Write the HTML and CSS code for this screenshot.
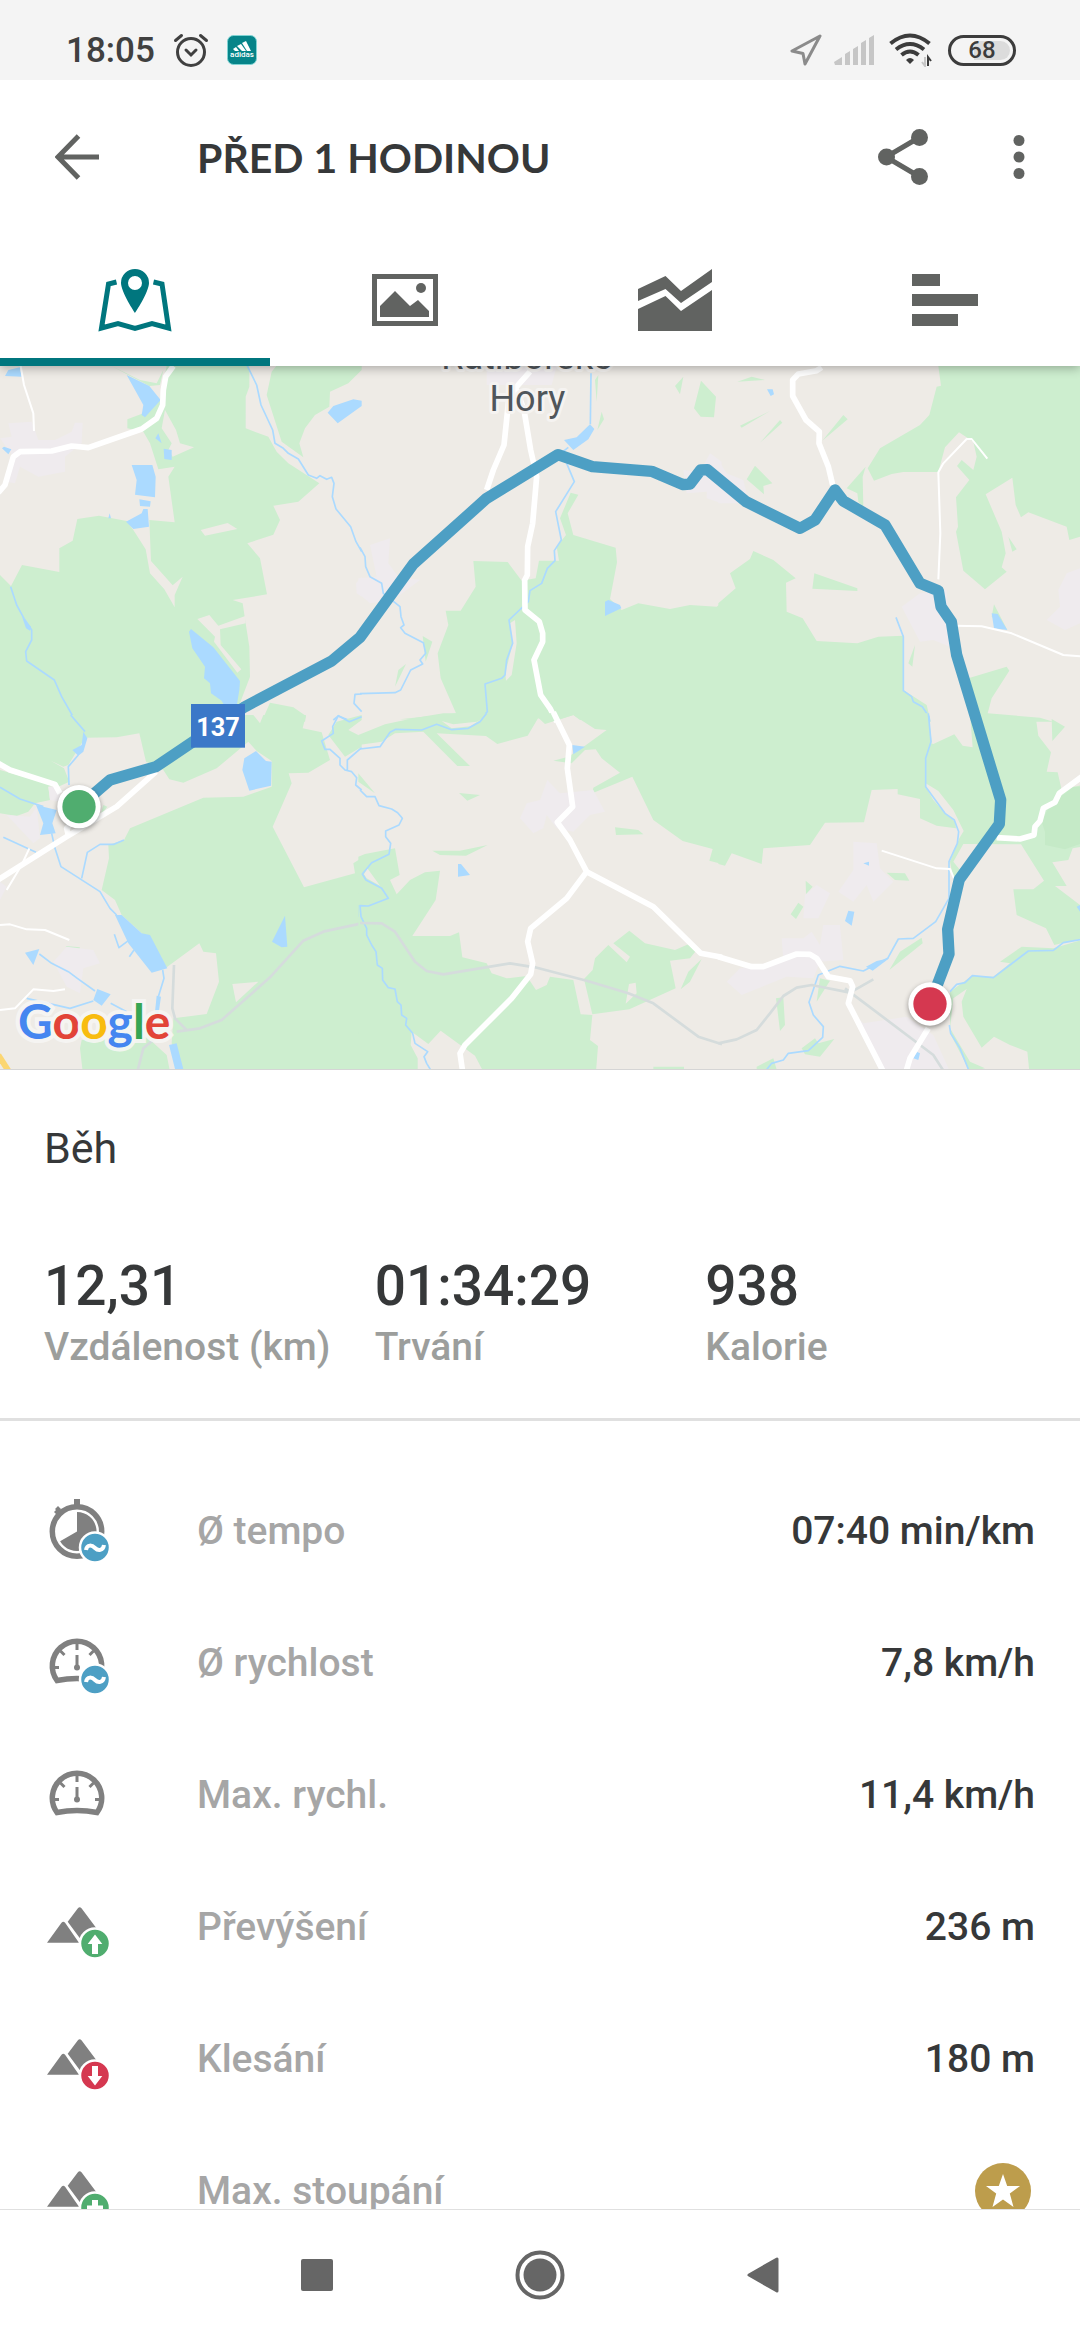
FILE: index.html
```html
<!DOCTYPE html>
<html lang="cs">
<head>
  <meta charset="UTF-8" />
  <meta name="viewport" content="width=device-width, initial-scale=1" />
  <title>Před 1 hodinou</title>
  <link rel="stylesheet" href="styles.css">
</head>
<body>
  <!-- Status bar -->
  <div class="status-bar">
    <div class="status-left">
      <span class="clock">18:05</span>
      <svg class="status-alarm" width="36" height="36" viewBox="0 0 36 36" fill="none" stroke="#404040" stroke-width="3" stroke-linecap="round">
        <circle cx="18" cy="20" r="13.5" />
        <path d="M13 18l5 5 5-5M2.5 8.5l6-5M33.5 8.5l-6-5" />
      </svg>
      <svg class="status-app" width="30" height="30" viewBox="0 0 30 30">
        <rect x=".5" y=".5" width="29" height="29" rx="6" fill="#068489" stroke="#7fd3d3" />
        <path d="M6 14l3-2 3 4H8zM10 11l4-2 5 7h-4zM15 8l4-2 5 10h-4z" fill="#fff" />
        <text class="app-name" x="15" y="22" text-anchor="middle">adidas</text>
      </svg>
    </div>
    <div class="status-right">
      <svg width="32" height="32" viewBox="0 0 32 32" fill="none" stroke="#8b8b8b" stroke-width="3" stroke-linejoin="round">
        <path d="M30 2L2 17l11 2.5L15 30z" />
      </svg>
      <svg class="status-signal" width="40" height="30" viewBox="0 0 40 30" fill="#c6c6c6">
        <path d="M0 27l8-5v8H1zM11 19l5-3v14h-5zM19 14l5-3v19h-5zM27 8l5-3v25h-5zM35 3l5-3v30h-5z" />
      </svg>
      <svg class="status-wifi" width="44" height="34" viewBox="0 0 44 34" fill="none" stroke="#3c3c3c" stroke-width="4">
        <path d="M1.5 10.5q19.5-16 39 0M7 16.5q14-11 28 0M12.5 22q8.5-7 17 0" />
        <path d="M21 31l-4-4q4-4 8 0z" fill="#3c3c3c" stroke="none" />
        <path d="M39 33v-9l3 4" stroke-width="2" /><path d="M36 24v9l-3-4" stroke="#c6c6c6" stroke-width="2" />
      </svg>
      <span class="battery">68</span>
    </div>
  </div>

  <header class="header">
    <div class="toolbar">
      <button class="icon-btn" aria-label="Zpět">
        <svg width="44" height="46" viewBox="0 0 44 46" fill="none" stroke="#616361" stroke-width="5">
          <path d="M44 23H4M23.5 2L3 23l20.5 21" />
        </svg>
      </button>
      <h1>PŘED 1 HODINOU</h1>
      <button class="icon-btn share-btn" aria-label="Sdílet">
        <svg width="50" height="56" viewBox="0 0 50 56" fill="#616361">
          <path d="M42 8L8 28l34 20" fill="none" stroke="#616361" stroke-width="5" />
          <circle cx="8.5" cy="28" r="8.5" /><circle cx="41.5" cy="8.5" r="8.5" /><circle cx="41.5" cy="47.5" r="8.5" />
        </svg>
      </button>
      <button class="icon-btn" aria-label="Další možnosti">
        <svg width="12" height="46" viewBox="0 0 12 46" fill="#616361">
          <circle cx="6" cy="6.5" r="5.5" /><circle cx="6" cy="23" r="5.5" /><circle cx="6" cy="39.5" r="5.5" />
        </svg>
      </button>
    </div>

    <nav class="tabs">
      <button class="tab active" aria-label="Mapa">
        <svg width="74" height="64" viewBox="0 0 74 64">
          <path d="M18.5 14l-8 2L3.5 60l16.500-4.500 17 5 17-5L70.5 60l-6.500-44-8.500-2" fill="none" stroke="#00767e" stroke-width="5" />
          <path d="M37 1a14 14 0 0 0-14 14c0 9 14 30 14 30s14-21 14-30A14 14 0 0 0 37 1zm0 7a7 7 0 1 1 0 14 7 7 0 0 1 0-14z" fill="#00767e" />
        </svg>
      </button>
      <button class="tab" aria-label="Fotky">
        <svg width="66" height="52" viewBox="0 0 66 52" fill="#616361">
          <rect x="2.5" y="2.5" width="61" height="47" fill="none" stroke="#616361" stroke-width="5" />
          <path d="M8 43V32l15-15 15 15 8-6 11 11v6z" /><circle cx="49" cy="14" r="5" />
        </svg>
      </button>
      <button class="tab" aria-label="Grafy">
        <svg width="74" height="62" viewBox="0 0 74 62" fill="#616361">
          <path d="M0 20L27.5 7 43 22 74 0v13L43 34 27.5 20 0 32z" />
          <path d="M0 40l27.5-13L43 42l31-21v41H0z" />
        </svg>
      </button>
      <button class="tab" aria-label="Mezičasy">
        <svg width="66" height="52" viewBox="0 0 66 52" fill="#616361">
          <path d="M0 0h28v12H0zM0 20h66v12H0zM0 40h46v12H0z" />
        </svg>
      </button>
    </nav>
  </header>

  <!-- Map with the route -->
  <div class="map">
    <svg class="map-canvas" viewBox="0 0 3240 2109" preserveAspectRatio="xMidYMid slice">
      <!-- north west -->
      <g transform="translate(0 -18)">
        <path class="wood" d="M500,18 748,18 748,80 737,110 737,205 805,230 830,275 865,310 958,370 895,425 820,437 840,480 820,524 742,550 780,595 801,703 698,720 728,730 737,790 748,860 750,950 712,1050 575,1080 0,1080 0,645 33,678 66,615 178,636 178,565 218,542 232,477 297,467 380,483 400,510 437,568 450,640 493,688 524,742 524,705 548,650 518,676 453,603 448,480 524,487 505,350 524,320 475,328 450,250 430,215 382,205 382,178 430,160 480,120zM815,35 835,10 1085,10 1085,30 1045,70 990,95 988,140 945,165 915,205 898,250 910,292 845,245 800,105zM785,1085 810,1028 880,1042 918,1068 915,1085zM335,18 420,60 470,70 490,30 480,75 448,78 385,45z" />
        <path class="land" d="M592,777 628,765 655,797 736,768 737,790 660,808 662,855 724,928 712,938 642,845 645,830zM602,510 683,489 712,507 615,527zM495,150 528,210 540,250 582,262 518,290 505,270 515,250 485,205z" />
        <path class="town" d="M0,235 35,230 25,190 95,185 115,240 165,240 215,215 225,188 248,188 245,250 195,290 195,335 115,350 60,320 45,370 20,365 40,290zM1085,650 1068,670 1070,700 1085,710z" />
        <path class="water" d="M380,45 448,78 482,120 435,172 425,165 430,135zM395,315 457,315 467,350 465,412 405,404 410,360zM418,418 452,424 450,440 420,438zM378,485 425,460 430,447 443,447 447,500 400,507zM1085,122 1060,118 1000,138 983,158 1013,190 1085,138zM573,807 640,862 720,963 718,990 708,1050 680,1050 665,1022 633,1000 630,970 612,955 615,920 577,865 567,815zM466,235 475,220 485,250zM491,266 515,270 515,300 493,297zM15,48 25,30 60,22 65,50zM6,265 12,260 34,268 25,283zM325,475 329,460 333,475zM66,770 93,800 90,812 78,805z" />
        <path class="stream" d="M742,18 770,75 783,135 818,210 825,250 850,265 865,280 895,297 925,345 950,355 960,347 980,358 995,352 1002,370 997,410 1008,447 1052,500 1068,545 1085,575M32,680 50,735 72,775 95,810 95,840 77,875 80,903 163,960 185,1010 225,1080M1085,1002 1065,1003 1062,1030 1085,1055M1000,1080 1015,1068 1045,1080" />
        <path class="road" d="M520,18 497,50 490,90 488,135 470,175 425,207 265,263 215,258 155,273 60,275 40,290 15,375 -5,398" />
        <path class="lane" d="M62,18 72,75 100,160 102,213" />
      </g>
      <!-- north -->
      <g transform="translate(1080 -18)">
        <path class="wood" d="M340,603 443,606 485,662 527,655 537,602 597,602 590,560 606,540 618,525 600,475 632,398 655,404 623,460 640,525 767,563 771,607 750,717 785,750 835,730 930,747 990,735 1070,740 1086,728 1086,1070 660,1080 640,1065 600,1078 530,1075 500,1090 120,1078 288,1060 242,955 233,880 265,795 257,752 302,752 347,680zM188,828 217,845 197,905zM115,930 138,912 105,980zM705,60 715,45 710,125zM725,155 732,178 712,210zM945,78 970,50 960,103zM1023,62 1068,110 1062,172 1022,170 1002,145z" />
        <path class="land" d="M465,780 470,850 455,945 438,962 436,940 458,850 450,790z" />
        <path class="town" d="M30,555 90,535 85,610 115,650 180,660 100,720 30,730 -5,700 -5,655 50,650zM380,18 590,18 575,75 380,75zM970,330 1020,335 1050,280 1085,305 1085,430 1040,415 1040,395 980,400z" />
        <path class="water" d="M612,240 650,232 690,193 703,207 685,238 640,270zM735,725 745,720 780,735 784,745 735,768z" />
        <path class="stream" d="M693,40 691,193M590,290 625,262M620,310 643,365 587,455 604,540 583,572 585,602 562,625 545,670 510,692 505,725 447,780 458,850 440,900 435,945 425,955 375,972 382,1055 355,1085M0,562 15,590 17,620 30,650 65,670 70,700 120,740 123,770 132,795 122,803 135,820 190,848 197,880 180,900 188,912 152,930 122,990 105,998 0,1001" />
        <path class="road" d="M510,35 470,80 445,130 432,255 400,330 380,390M470,90 492,150 512,270 530,350 518,490 503,560 502,645 494,660 495,750 538,785 548,820 548,845 522,900 542,1005 570,1045 590,1085" />
      </g>
      <!-- north east -->
      <g transform="translate(2160 -18)">
        <path class="wood" d="M655,18 1080,18 1080,530 1048,540 1040,500 925,457 903,472 887,435 877,353 797,403 845,515 857,580 845,622 860,635 795,688 730,632 708,515 714,500 708,412 748,360 711,318 725,300 760,330 770,290 760,245 717,217 675,262 655,336 550,336 515,342 462,362 443,325 480,265 600,195 628,165 650,80 663,77zM100,573 160,600 227,655 198,668 200,755 248,775 290,843 412,850 475,830 550,827 550,990 620,1035 632,1085 -5,1085 -5,730 47,685 30,640 90,597zM283,640 412,685 412,693 277,686zM380,385 437,320 428,350 430,440 415,425 412,400zM80,358 105,317 157,370 130,378 132,403zM52,65 95,50 135,60zM60,197 150,153 65,203zM120,248 180,180 187,188zM307,242 370,165 383,178zM585,855 577,920 565,910zM865,530 890,568 877,575zM822,733 862,810 815,770zM745,955 860,920 868,932 815,1015 803,1060 960,1073 1000,1085 760,1085z" />
        <path class="town" d="M545,740 600,700 680,690 690,860 640,840 600,845zM980,780 1020,740 1015,690 1040,640 1080,625 1080,790 1035,810zM-5,300 20,340 70,360 80,400 60,430 -5,430z" />
        <path class="water" d="M815,760 833,762 862,810 822,805zM141,88 158,88 162,103 152,108z" />
        <path class="stream" d="M528,772 550,830 550,992 575,1010 580,1025 607,1040 627,1070 629,1085" />
        <path class="road" d="M305,22 290,32 235,42 218,60 218,108 258,180 298,215 297,250 325,320 338,375" />
        <path class="lane" d="M655,658 661,520 655,337 670,310 740,237 755,237 802,296M705,797 785,799 875,820 1030,885 1080,889" />
      </g>
      <!-- south west -->
      <g transform="translate(0 1047)">
        <path class="wood" d="M0,0 760,0 780,25 790,0 918,0 908,40 965,52 990,135 925,173 866,175 875,205 818,335 912,517 1065,475 1060,445 1086,428 1086,1070 550,1070 515,985 520,910 620,897 657,800 648,715 610,710 598,685 500,757 425,655 365,600 345,555 305,525 327,430 325,390 372,375 390,340 610,248 730,245 815,215 815,138 770,108 745,80 650,160 550,203 508,193 490,165 438,140 418,55 350,67 255,68 205,150 190,155 152,137 192,160 208,200 175,215 165,205 30,160 0,145zM0,165 165,212 145,215 150,255 105,265 85,290 50,303 0,295zM245,975 440,965 500,1020 510,1070 248,1070 240,1000zM197,693 240,697 228,722zM985,60 1010,20 1085,0 1085,15 1045,45 1085,65 1085,95 1035,125zM310,270 322,275 300,305z" />
        <path class="land" d="M697,807 775,800 708,862z" />
        <path class="town" d="M20,300 90,305 110,275 120,370 100,385zM160,740 200,695 280,705 300,745 250,760 240,835 200,815zM145,215 175,215 185,260 150,255zM0,500 20,515 0,555z" />
        <path class="water" d="M768,108 798,138 815,140 813,212 748,227 727,165 733,130zM345,600 365,600 425,655 450,660 502,760 455,773 385,685zM108,270 170,285 157,325 167,355 120,360 130,325zM855,602 862,695 845,697 816,680zM75,713 118,702 100,750zM292,822 332,838 305,872 280,855zM250,50 262,70 250,110 235,122 217,105 245,90zM470,842 483,845 475,900 465,890zM507,990 530,985 552,1070 527,1070zM1075,570 1086,570 1086,610 1075,605z" />
        <path class="stream" d="M212,0 255,50M235,120 205,155 207,210M0,217 60,252 130,275M155,355 165,400 183,455 300,530 330,580 350,600M245,490 262,412 300,388 342,388 372,375M10,367 108,412M343,658 357,698 385,677M388,725 402,705M118,717 155,745 205,770 232,790 285,828M332,865 380,890M280,858 210,880 80,850M488,765 492,790 475,845M1085,5 1048,20 1015,2 998,35 1000,55 965,78 975,103 990,103 1020,130 1020,150 1035,165 1055,170 1070,188 1067,210 1085,225M1042,165 1042,135 1085,98" />
        <path class="rail" d="M1085,625 970,650 910,677 810,787 665,915 600,940 530,950M522,750 517,880 525,910 560,945M412,1070 430,1000 460,975" />
        <path class="road" d="M-5,494 200,365 350,275 468,170M-5,145 30,165 165,208 180,235M205,360 200,340 240,300" />
        <path class="lane" d="M0,630 30,628 80,643 135,645 208,675M0,885 45,880 100,823 160,828 195,823M88,400 65,450 20,525" />
        <path class="highway" d="M-5,1020 30,1075" />
      </g>
      <!-- south -->
      <g transform="translate(1080 1047)">
        <path class="wood" d="M-5,90 -5,60 75,28 160,10 250,-5 650,-5 640,0 555,27 535,8 503,62 412,87 378,63 230,55 330,153 292,153 190,50 105,55 65,80zM640,0 680,-5 1086,-5 1086,447 1048,437 1058,402 968,378 880,315 817,185 697,235 700,218 780,173 725,130 707,103 675,105 635,145 580,137 625,125 675,92 740,45 705,42zM297,234 360,240 322,257zM217,407 300,407 383,390 318,422 240,420zM765,337 835,345 850,358 768,360zM-5,175 45,235 -5,200zM-5,425 15,417 105,400 119,480 90,495 110,538 150,495 195,472 240,467 227,555 157,663 270,663 297,652 307,727 380,745 395,775 440,790 500,783 528,825 560,810 570,785 640,795 662,898 697,900 690,975 714,993 708,1070 370,1070 345,1022 242,947 205,987 155,950 152,990 173,1030 173,1070 -5,1070zM672,792 698,765 705,730 745,690 800,742 810,725 760,685 808,647 855,685 945,705 985,688 1010,705 990,730 930,737 947,820 808,883 697,898zM1025,732 990,800 962,823 985,770zM880,1055 972,1055 972,1070 880,1070z" />
        <path class="land" d="M807,807 827,803 830,835 797,866zM245,18 280,28 350,20 370,10 330,34 275,40zM22,460 60,512 20,490 12,478z" />
        <path class="town" d="M480,310 500,265 540,255 562,195 600,235 700,225 735,290 690,300 640,350 590,340 560,300 550,340 520,355z" />
        <path class="water" d="M637,90 675,95 640,118zM294,447 303,447 330,480 294,485z" />
        <path class="stream" d="M0,102 60,95 90,52 107,43 185,45 230,28 275,44 325,40 360,20 380,-5M0,225 20,245 45,245 57,272 95,282 113,293 127,310 117,330 77,348 77,365 92,385 87,418 35,443 7,477 18,495 65,520 85,550 25,573 0,572 3,605 20,640 20,660 35,690 48,710 52,750 67,760 68,795 85,818 105,822 112,860 123,870 125,900 140,910 137,930 158,955 165,985 203,1010 192,1025 200,1045 215,1070" />
        <path class="rail" d="M0,624 65,625 105,650 165,740 200,768 250,778 450,745 525,757 680,797 805,835 880,865 1015,965 1086,988" />
        <path class="road" d="M580,-8 628,90 622,160 638,275 592,322 630,375 680,470 880,575 1022,715 1086,727M680,470 620,550 512,640 503,680 518,745 512,778 455,850 315,990 300,1015 308,1070" />
      </g>
      <!-- south east -->
      <g transform="translate(2160 1047)">
        <path class="wood" d="M-5,-5 625,-5 635,80 617,130 617,215 640,255 675,295 705,320 708,340 650,332 600,310 600,252 533,238 533,222 455,225 432,322 315,323 270,390 130,400 125,447 35,415 15,452 -5,447zM640,87 703,58 728,92 758,97 750,-5 810,0 948,12 955,62 993,112 980,170 1013,172 1025,225 1086,210 1086,395 1058,400 1045,435 997,442 1040,513 1005,513 1080,570 1086,670 1003,690 978,640 890,600 880,523 940,523 972,497 903,388 730,387 700,440 720,465 700,490 690,440 718,370 731,348 700,285 655,228 617,205 617,130 632,85zM840,740 905,695 1000,700 1086,675 1086,1070 928,1070 922,1010 870,990 822,965 785,998 730,905 725,860 740,822 700,850 690,940 750,1040 795,1060 750,1070 690,955 690,830 755,783 820,785 870,745zM508,765 540,710 605,668 608,685zM500,473 555,475 568,497 525,495zM257,497 278,515 258,538zM235,563 250,575 228,612 212,598zM300,790 330,797 290,860zM168,850 190,847 195,930 180,948zM245,1000 285,970 295,985 343,972 300,1025 255,1018zM110,1055 160,1030 172,1070 110,1070zM995,12 1035,35 997,78z" />
        <path class="park" d="M1086,215 1060,215 990,270 965,320 975,350 975,390 1035,403 1086,385z" />
        <path class="town" d="M400,380 470,385 480,460 520,500 460,560 440,510 400,560 355,530 400,465zM250,610 255,540 290,510 330,535 295,610zM185,670 250,670 275,650 300,690 310,630 360,630 370,735 300,740 280,790 200,785 65,840 20,800 60,760 190,735zM385,880 430,925 560,905 640,960 690,1070 480,1070z" />
        <path class="water" d="M430,445 447,440 447,452zM385,587 403,590 395,632 375,618zM438,755 470,738 508,730 458,767zM590,1010 600,1015 595,1035 580,1030zM1070,575 1080,570 1080,590z" />
        <path class="stream" d="M625,-5 633,80 617,130 617,215 675,295 703,315 716,350 712,385 687,440 687,550 647,620 580,670 535,672 503,730 430,768 360,754 295,780 267,862 280,900 310,935 308,967 265,1007 205,1015 190,1035 155,1045 135,1070M690,830 710,808 735,803 757,782 820,788 925,708 1000,706 1030,683 1086,673M688,930 692,955 720,1000 748,1070" />
        <path class="rail" d="M-5,985 50,973 110,945 150,895 190,843 230,818 275,810 375,830 390,833 460,793M375,820 640,1020 672,1070" />
        <path class="road" d="M-5,725 95,755 130,755 230,717 270,718 290,730 325,785 390,797 398,815 385,865 490,1070M625,940 570,1030 558,1070M830,368 900,372 942,360 945,335 960,318 970,280 1005,262 1018,235 1086,185" />
        <path class="lane" d="M485,407 650,460 690,462 702,490" />
      </g>

      <g class="place">
        <text x="1580" y="10">Ratibořské</text>
        <text x="1582" y="135">Hory</text>
      </g>

      <path class="route" d="M237,1322 330,1242 468,1202 735,1022 995,885 1080,814 1240,594 1460,397 1674,266 1777,302 1955,316 2050,356 2070,354 2102,312 2122,311 2238,407 2400,487 2445,462 2505,372 2530,405 2655,477 2760,652 2815,674 2823,722 2854,767 2870,867 3002,1302 2998,1374 2878,1540 2843,1690 2847,1764 2790,1914" />

      <rect x="573" y="1014" width="162" height="131" fill="#3b78c8" />
      <text class="road-number" x="654" y="1109">137</text>

      <g class="marker">
        <circle class="marker-rim" cx="237" cy="1322" r="65" /><circle cx="237" cy="1322" r="50" fill="#50ad6f" />
      </g>
      <g class="marker">
        <circle class="marker-rim" cx="2790" cy="1914" r="65" /><circle cx="2790" cy="1914" r="50" fill="#d53850" />
      </g>
    </svg>
    <div class="google"><span class="g-blue">G</span><span class="g-red">o</span><span class="g-yellow">o</span><span class="g-blue">g</span><span class="g-green">l</span><span class="g-red">e</span></div>
  </div>

  <!-- Summary -->
  <section class="summary">
    <h2>Běh</h2>
    <div class="stats">
      <div class="stat"><strong>12,31</strong><span>Vzdálenost (km)</span></div>
      <div class="stat"><strong>01:34:29</strong><span>Trvání</span></div>
      <div class="stat"><strong>938</strong><span>Kalorie</span></div>
    </div>
  </section>

  <!-- Details -->
  <ul class="details">
    <li>
      <svg width="72" height="72" viewBox="0 0 72 72">
        <circle cx="32" cy="36.5" r="24.7" fill="none" stroke="#808080" stroke-width="5.5" />
        <path d="M29 4h6v8h-6zM9 17l2-2-1-1 3-3 3 3-1 2 2 1-4 4zM32 36.5V17a19.5 19.5 0 1 1-16.9 29.2z" fill="#808080" />
        <circle cx="50" cy="52.5" r="15" fill="#4d9fc4" stroke="#fff" stroke-width="2.5" />
        <path d="M41 55c1-6 6-5 9-2s8 3 9-3" fill="none" stroke="#fff" stroke-width="4" />
      </svg>
      <span class="label">Ø tempo</span>
      <span class="value">07:40 min/km</span>
    </li>
    <li>
      <svg width="72" height="72" viewBox="0 0 72 72">
        <path d="M12 53.5a24.7 24.7 0 1 1 40 0q-20-4-40 0z" fill="none" stroke="#808080" stroke-width="5.5" />
        <path d="M32 17v6M8 40.5h6M50 40.5h6M15.5 24l4 4M48.5 24l-4 4M32 28v12" fill="none" stroke="#808080" stroke-width="3" />
        <circle cx="32" cy="40.5" r="3" fill="#808080" />
        <circle cx="50" cy="52.5" r="15" fill="#4d9fc4" stroke="#fff" stroke-width="2.5" />
        <path d="M41 55c1-6 6-5 9-2s8 3 9-3" fill="none" stroke="#fff" stroke-width="4" />
      </svg>
      <span class="label">Ø rychlost</span>
      <span class="value">7,8 km/h</span>
    </li>
    <li>
      <svg width="72" height="72" viewBox="0 0 72 72">
        <path d="M12 53.5a24.7 24.7 0 1 1 40 0q-20-4-40 0z" fill="none" stroke="#808080" stroke-width="5.5" />
        <path d="M32 17v6M8 40.5h6M50 40.5h6M15.5 24l4 4M48.5 24l-4 4M32 28v12" fill="none" stroke="#808080" stroke-width="3" />
        <circle cx="32" cy="40.5" r="3" fill="#808080" />
      </svg>
      <span class="label">Max. rychl.</span>
      <span class="value">11,4 km/h</span>
    </li>
    <li>
      <svg width="72" height="72" viewBox="0 0 72 72">
        <path d="M2 51.7l14.5-20q1.8-2 3.6 0L34 51.7zM22.7 30.7l10.2-13.500q1.8-2 3.6 0L52 38 34.7 47z" fill="#808080" />
        <circle cx="50" cy="52.5" r="15" fill="#50ad6f" stroke="#fff" stroke-width="2.5" />
        <path d="M50 43.5l7.3 9.5H53v10h-6V53h-4.3z" fill="#fff" />
      </svg>
      <span class="label">Převýšení</span>
      <span class="value">236 m</span>
    </li>
    <li>
      <svg width="72" height="72" viewBox="0 0 72 72">
        <path d="M2 51.7l14.5-20q1.8-2 3.6 0L34 51.7zM22.7 30.7l10.2-13.500q1.8-2 3.6 0L52 38 34.7 47z" fill="#808080" />
        <circle cx="50" cy="52.5" r="15" fill="#d53850" stroke="#fff" stroke-width="2.5" />
        <path d="M50 62.5l7.3-9.5H53V43h-6v10h-4.3z" fill="#fff" />
      </svg>
      <span class="label">Klesání</span>
      <span class="value">180 m</span>
    </li>
    <li>
      <svg width="72" height="72" viewBox="0 0 72 72">
        <path d="M2 51.7l14.5-20q1.8-2 3.6 0L34 51.7zM22.7 30.7l10.2-13.500q1.8-2 3.6 0L52 38 34.7 47z" fill="#808080" />
        <circle cx="50" cy="52.5" r="15" fill="#50ad6f" stroke="#fff" stroke-width="2.5" />
        <path d="M47 45h6v5.5h5v6h-5V62h-6v-5.5h-5v-6h5z" fill="#fff" />
      </svg>
      <span class="label">Max. stoupání</span>
      <svg class="premium" width="56" height="56" viewBox="0 0 56 56">
        <circle cx="28" cy="28" r="28" fill="#bd9d4c" />
        <path d="M28 11l4.2 12H45L34.8 30.5 38.5 44 28 36.5 17.5 44l3.7-13.5L11 23h12.8z" fill="#fff" />
      </svg>
    </li>
  </ul>

  <!-- System navigation -->
  <nav class="system-nav">
    <button aria-label="Poslední aplikace"><svg width="32" height="32"><rect width="32" height="32" rx="2" fill="#666" /></svg></button>
    <button aria-label="Domů">
      <svg width="50" height="50" viewBox="0 0 50 50"><circle cx="25" cy="25" r="22.5" fill="none" stroke="#666" stroke-width="4" /><circle cx="25" cy="25" r="16.5" fill="#666" /></svg>
    </button>
    <button aria-label="Zpět">
      <svg width="32" height="38" viewBox="0 0 32 38"><path d="M2 19L30 3v32z" fill="#666" stroke="#666" stroke-width="3" stroke-linejoin="round" /></svg>
    </button>
  </nav>
</body>
</html>
```
FILE: styles.css
```css
* {
  box-sizing: border-box;
}
body {
  margin: 0;
  height: 100vh;
  display: flex;
  flex-direction: column;
  overflow: hidden;
  font-family: Roboto, 'Noto Sans', sans-serif;
  font-weight: 500;
  color: #363839;
  background: #fff;
}
h1, h2, ul {
  margin: 0;
  padding: 0;
}
svg {
  display: block;
  flex-shrink: 0;
}
button {
  display: flex;
  align-items: center;
  justify-content: center;
  padding: 0;
  border: none;
  background: none;
  cursor: pointer;
}

/* Status bar */
.status-bar {
  position: relative;
  z-index: 2;
  display: flex;
  flex-shrink: 0;
  justify-content: space-between;
  height: 80px;
  padding: 20px 64px 0 66px;
  background: #f4f4f4;
}
.status-left,
.status-right {
  display: flex;
  align-items: center;
}
.clock {
  font-size: 35px;
  color: #404040;
}
.status-alarm {
  margin-left: 18px;
}
.status-app {
  margin-left: 18px;
}
.app-name {
  font-size: 8px;
  fill: #fff;
}
.status-signal {
  margin-left: 12px;
}
.status-wifi {
  margin-left: 15px;
}
.battery {
  width: 68px;
  height: 31px;
  margin-left: 15px;
  border: 3px solid #3c3c3c;
  border-radius: 16px;
  background: linear-gradient(90deg, transparent 20px, #dcdcdc 20px) content-box;
  padding: 3px;
  font-size: 24px;
  line-height: 19px;
  text-align: center;
  color: #3c3c3c;
}

/* Header */
.header {
  position: relative;
  z-index: 1;
  flex-shrink: 0;
  background: #fff;
  box-shadow: 0 2px 10px rgba(0,0,0,0.3);
}
.toolbar {
  display: flex;
  align-items: center;
  height: 154px;
  padding: 0 55px;
}
.toolbar h1 {
  flex: 1;
  padding-left: 98px;
  font-family: Lato, sans-serif;
  font-size: 41px;
  font-weight: 700;
}
.share-btn {
  margin-right: 85px;
}
.tabs {
  display: flex;
  height: 132px;
}
.tab {
  flex: 1;
  border-top: 8px solid transparent;
  border-bottom: 8px solid transparent;
}
.tab.active {
  border-bottom-color: #00767e;
}

/* Map */
.map {
  position: relative;
  flex-shrink: 0;
  background: #eeebe6;
  border-bottom: 1px solid #d5d5d5;
}
.map-canvas {
  width: 100%;
  height: auto;
}
.wood {
  fill: #cdeecf;
}
.park {
  fill: #c5eac7;
}
.land {
  fill: #eeebe6;
}
.town {
  fill: #efebee;
}
.water {
  fill: #abdaff;
}
.stream,
.road,
.lane,
.rail,
.highway,
.route {
  fill: none;
  stroke-linejoin: round;
}
.stream {
  stroke: #abdaff;
  stroke-width: 5px;
}
.road {
  stroke: #fff;
  stroke-width: 17px;
}
.lane {
  stroke: #fff;
  stroke-width: 6px;
}
.rail {
  stroke: #d5dcdc;
  stroke-width: 8px;
}
.highway {
  stroke: #fbd672;
  stroke-width: 18px;
}
.route {
  stroke: #4d9fc4;
  stroke-width: 34px;
}
.place {
  font-size: 108px;
  font-weight: 400;
  text-anchor: middle;
  fill: #50565b;
  stroke: #f5f3f1;
  stroke-width: 18px;
  stroke-linejoin: round;
  paint-order: stroke;
}
.road-number {
  font-size: 76px;
  font-weight: 700;
  text-anchor: middle;
  fill: #fff;
}
.marker {
  filter: drop-shadow(0 6px 8px rgba(0,0,0,0.4));
}
.marker-rim {
  fill: #fff;
}
.google {
  position: absolute;
  left: 18px;
  bottom: 18px;
  font-family: Lato, sans-serif;
  font-size: 48px;
  font-weight: 700;
  line-height: 60px;
  -webkit-text-stroke: 8px rgba(247,246,244,0.9);
  paint-order: stroke;
}
.g-blue {
  color: #4586f0;
}
.g-red {
  color: #e24438;
}
.g-yellow {
  color: #f8bc10;
}
.g-green {
  color: #36a653;
}

/* Summary */
.summary {
  flex-shrink: 0;
  padding: 48px 44px 46px;
  border-bottom: 3px solid #e0e0e0;
}
.summary h2 {
  font-size: 43px;
  font-weight: 400;
  line-height: 60px;
}
.stats {
  display: grid;
  grid-template-columns: repeat(3, 1fr);
  margin-top: 72px;
}
.stat strong,
.stat span {
  display: block;
  white-space: nowrap;
}
.stat strong {
  font-size: 55px;
  font-weight: 500;
  line-height: 72px;
}
.stat span {
  font-size: 39px;
  line-height: 50px;
  color: #9c9e9c;
}

/* Details */
.details {
  flex: 1;
  min-height: 0;
  padding: 44px 45px 0;
  overflow: hidden;
  list-style: none;
  font-size: 39px;
}
.details li {
  display: flex;
  align-items: center;
  height: 132px;
}
.label {
  flex: 1;
  padding-left: 80px;
  color: #a6a6a6;
}
.premium {
  margin-right: 4px;
}

/* System navigation */
.system-nav {
  display: flex;
  flex-shrink: 0;
  justify-content: center;
  height: 131px;
  border-top: 1px solid #e0e0e0;
  background: #fff;
}
.system-nav button {
  width: 223px;
}
```
